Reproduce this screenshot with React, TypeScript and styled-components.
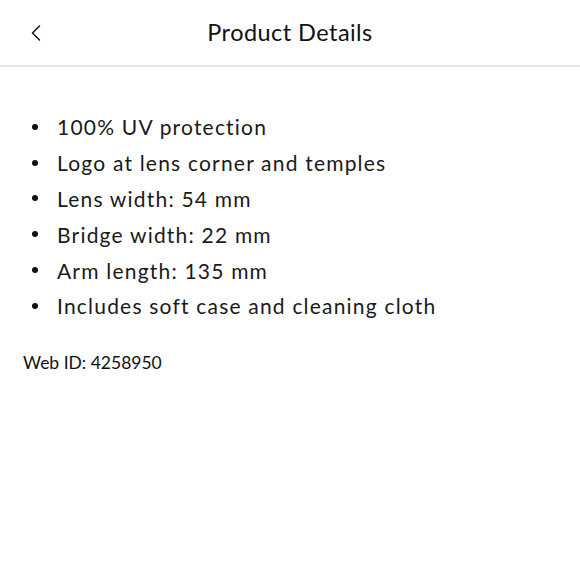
import React from "react";
import styled, { createGlobalStyle } from "styled-components";

const Global = createGlobalStyle`
  html, body { margin: 0; padding: 0; background: #fff; }
  body { font-family: Lato, "Noto Sans", sans-serif; color: #111; }
`;

const Page = styled.div`
  width: 580px;
  min-height: 580px;
  background: #fff;
`;

const Header = styled.header`
  height: 65px;
  border-bottom: 2px solid #e6e6e6;
  display: grid;
  grid-template-columns: 72px 1fr 72px;
  align-items: center;
`;

const Back = styled.button`
  background: none;
  border: 0;
  padding: 0 0 0 31px;
  height: 100%;
  display: flex;
  align-items: center;
  cursor: pointer;
`;

const Title = styled.h1`
  margin: 0;
  text-align: center;
  font-size: 23.5px;
  font-weight: 400;
  letter-spacing: 0.45px;
  color: #111;
  padding-bottom: 1px;
`;

const Content = styled.main`
  padding: 42px 23px 0;
`;

const List = styled.ul`
  list-style: none;
  margin: 0;
  padding: 0 0 0 8.5px;
  display: flex;
  flex-direction: column;
`;

const Item = styled.li`
  display: flex;
  align-items: center;
  gap: 19.5px;
  height: 35.8px;
  font-size: 21px;
  letter-spacing: 1.2px;
  color: #1a1a1a;
`;

const Dot = styled.span`
  width: 6px;
  height: 6px;
  border-radius: 50%;
  background: #111;
  flex: none;
`;

const WebId = styled.p`
  margin: 28px 0 0;
  font-size: 17.5px;
  color: #111;
`;

const items = [
  "100% UV protection",
  "Logo at lens corner and temples",
  "Lens width: 54 mm",
  "Bridge width: 22 mm",
  "Arm length: 135 mm",
  "Includes soft case and cleaning cloth",
];

export default function App() {
  return (
    <Page>
      <Global />
      <Header>
        <Back aria-label="Back">
          <svg width="10" height="16" viewBox="0 0 10 16" fill="none">
            <path d="M8.5 1 L1.5 8 L8.5 15" stroke="#111" strokeWidth="1.5" strokeLinecap="round" strokeLinejoin="round" />
          </svg>
        </Back>
        <Title>Product Details</Title>
        <span />
      </Header>
      <Content>
        <List>
          {items.map((t) => (
            <Item key={t}>
              <Dot />
              {t}
            </Item>
          ))}
        </List>
        <WebId>Web ID: 4258950</WebId>
      </Content>
    </Page>
  );
}
